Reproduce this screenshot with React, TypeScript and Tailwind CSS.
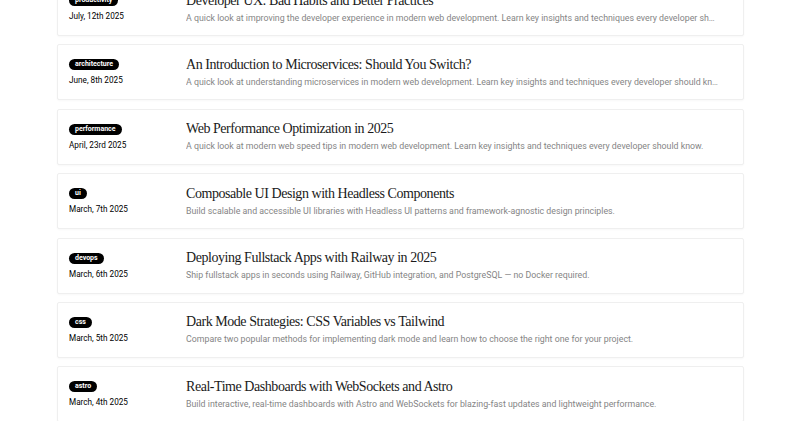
const posts = [
  {
    tag: "productivity",
    date: "July, 12th 2025",
    title: "Developer UX: Bad Habits and Better Practices",
    excerpt:
      "A quick look at improving the developer experience in modern web development. Learn key insights and techniques every developer should know.",
  },
  {
    tag: "architecture",
    date: "June, 8th 2025",
    title: "An Introduction to Microservices: Should You Switch?",
    excerpt:
      "A quick look at understanding microservices in modern web development. Learn key insights and techniques every developer should know.",
  },
  {
    tag: "performance",
    date: "April, 23rd 2025",
    title: "Web Performance Optimization in 2025",
    excerpt:
      "A quick look at modern web speed tips in modern web development. Learn key insights and techniques every developer should know.",
  },
  {
    tag: "ui",
    date: "March, 7th 2025",
    title: "Composable UI Design with Headless Components",
    excerpt:
      "Build scalable and accessible UI libraries with Headless UI patterns and framework-agnostic design principles.",
  },
  {
    tag: "devops",
    date: "March, 6th 2025",
    title: "Deploying Fullstack Apps with Railway in 2025",
    excerpt:
      "Ship fullstack apps in seconds using Railway, GitHub integration, and PostgreSQL — no Docker required.",
  },
  {
    tag: "css",
    date: "March, 5th 2025",
    title: "Dark Mode Strategies: CSS Variables vs Tailwind",
    excerpt:
      "Compare two popular methods for implementing dark mode and learn how to choose the right one for your project.",
  },
  {
    tag: "astro",
    date: "March, 4th 2025",
    title: "Real-Time Dashboards with WebSockets and Astro",
    excerpt:
      "Build interactive, real-time dashboards with Astro and WebSockets for blazing-fast updates and lightweight performance.",
  },
];

const sans = { fontFamily: "Roboto, 'Liberation Sans', sans-serif" };

export default function App() {
  return (
    <div className="min-h-screen bg-white overflow-hidden" style={sans}>
      <ul className="mx-auto -mt-[20px] flex w-[688px] flex-col gap-[8.4px] pl-px">
        {posts.map((post) => (
          <li
            key={post.title}
            className="flex h-[56px] items-center rounded-[2px] border border-[#efefef] bg-white pl-[11px] pr-3 shadow-[0_1px_2px_rgba(0,0,0,0.03)]"
          >
            <div className="flex w-[117px] shrink-0 flex-col items-start gap-[5px]">
              <span className="rounded-full bg-black px-[6px] py-[1px] text-[7px] font-bold leading-[9px] text-white">
                {post.tag}
              </span>
              <span className="text-[8.2px] leading-[10px] text-black">{post.date}</span>
            </div>
            <div className="flex min-w-0 flex-1 flex-col gap-[3px]">
              <h2
                className="truncate text-[14px] leading-[16px] tracking-[-0.45px] text-[#1a1a1a]"
                style={{ fontFamily: "'Liberation Serif', serif" }}
              >
                {post.title}
              </h2>
              <p className="truncate pr-3 text-[8.8px] leading-[12px] text-[#858585]">{post.excerpt}</p>
            </div>
          </li>
        ))}
      </ul>
    </div>
  );
}
